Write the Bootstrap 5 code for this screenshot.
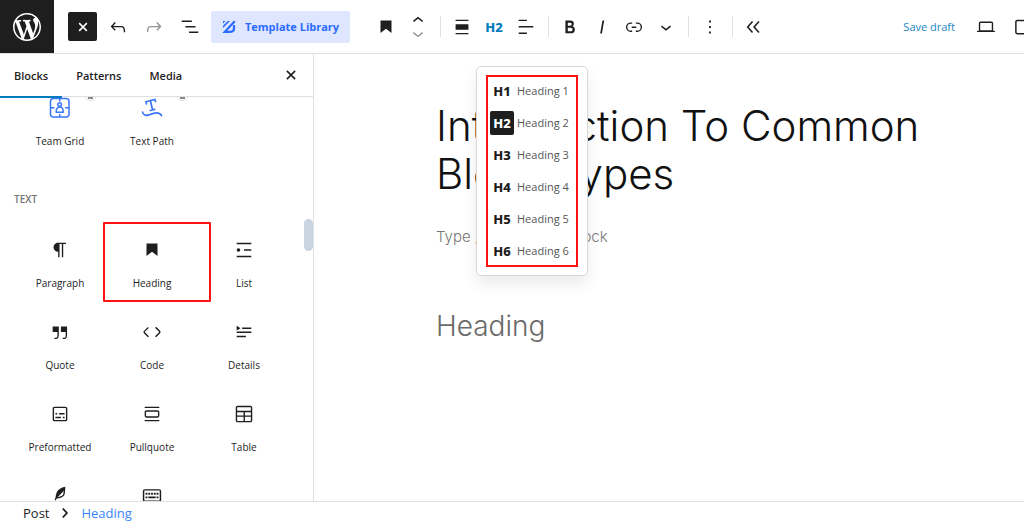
<!DOCTYPE html>
<html lang="en">
<head>
<meta charset="utf-8">
<meta name="viewport" content="width=device-width, initial-scale=1">
<title>Edit Post</title>
<link href="https://cdn.jsdelivr.net/npm/bootstrap@5.3.0/dist/css/bootstrap.min.css" rel="stylesheet">
<style>
  :root { --ink: #1e1e1e; --line: #e0e0e0; --wp: #007cba; --brand: #2b6bff; --mark: #fb1313; }
  body { font-family: "Open Sans", "Noto Sans", sans-serif; font-size: 11px; line-height: 16px; color: var(--ink); background: #fff; }
  button { font: inherit; color: inherit; background: none; border: 0; padding: 0; }
  svg { display: block; fill: currentColor; width: 22px; height: 22px; flex: none; }
  .topbar { height: 54px; border-bottom: 1px solid var(--line); }
  .wp-logo { width: 54px; height: 53px; background: #1e1e1e; color: #fff; }
  .wp-logo svg { width: 28px; height: 28px; }
  .close-inserter { width: 29px; height: 29px; border-radius: 2px; background: var(--ink); color: #fff; margin: 0 3px 0 14px; }
  .doc-tool { width: 36px; height: 32px; }
  .dimmed { color: #949494; }
  .library-btn { height: 32px; width: 139px; margin: 0 15px 0 3px; border-radius: 2px; background: #dfe6ff; color: var(--brand); font-weight: 700; gap: 9px; }
  .library-btn svg { width: 14px; height: 14px; }
  .tool-group { padding: 0 6px 0 5px; border-right: 1px solid var(--line); height: 21px; }
  .tool { width: 32px; height: 32px; }
  .mover svg { height: 14px; width: 22px; }
  .level-glyph { font-family: "Noto Sans", sans-serif; font-weight: 800; font-size: 13px; }
  .current { color: var(--wp); }
  .save-link { color: #1a86c4; text-decoration: none; margin-right: 15px; }
  .cut-tool { width: 15px; margin-left: 7px; }
  .inserter { width: 314px; border-right: 1px solid var(--line); }
  .tab-row { height: 43px; border-bottom: 1px solid var(--line); font-weight: 600; padding-right: 6px; }
  .tab-row .tab-btn { padding: 0 14px; height: 44px; }
  .tab-row .active { border-bottom: 2px solid var(--wp); padding-top: 2px; }
  .block-list { padding: 0 14px; }
  .tiles { display: grid; grid-template-columns: repeat(3, 92px); grid-auto-rows: 82px; }
  .tile { gap: 14px; font-size: 10px; padding-top: 14px; }
  .tiles.first { height: 94px; margin-top: -14px; }
  .pro-dot { top: 5px; left: 70px; width: 13px; height: 13px; border-radius: 50%; border: 1px solid #ddd; background: #fff; }
  .pro-dot::after { content: ""; position: absolute; left: 3px; right: 3px; top: 8px; height: 2px; background: #888; }
  .section-name { font-size: 10px; line-height: 12px; font-weight: 600; color: #757575; margin: 16px 0 20px; }
  .marked::after { content: ""; position: absolute; inset: -3px -13px 5px -3px; border: 2px solid var(--mark); border-radius: 1px; }
  .thumb { right: 0; top: 165px; width: 9px; height: 32px; border-radius: 5px; background: #c8d5e0; }
  .canvas { font-family: Inter, sans-serif; font-weight: 300; padding: 48px 24px 0 122px; }
  .canvas h1 { font-size: 42px; line-height: 48px; font-weight: 300; color: #111; max-width: 500px; margin: 0 0 27px; }
  .canvas p { font-size: 15px; line-height: 24px; color: #767676; margin: 0 0 57px; }
  .canvas h2 { font-size: 28px; line-height: 40px; font-weight: 300; color: #6a6a6a; margin: 0; }
  .levels { left: 162px; top: 12px; width: 112px; padding: 8px 9px; border: 1px solid #d8d8d8; border-radius: 5px; background: #fff; box-shadow: 0 8px 16px rgba(0,0,0,.08); font-family: "Open Sans", sans-serif; font-weight: 400; }
  .levels ul { outline: 2px solid var(--mark); outline-offset: -2px; }
  .levels button { height: 32px; gap: 3px; padding-left: 4px; color: #555; }
  .levels .level-glyph { width: 24px; height: 24px; line-height: 24px; border-radius: 2px; color: var(--ink); text-align: center; }
  .levels .picked .level-glyph { background: var(--ink); color: #fff; }
  .crumbs { height: 21px; border-top: 1px solid var(--line); padding: 2px 0 0 23px; gap: 7px; font-weight: 500; font-size: 13px; }
  .crumbs a { text-decoration: none; color: #3a86f7; }
  .crumbs svg { width: 18px; height: 18px; }
</style>
</head>
<body class="vh-100 d-flex flex-column overflow-hidden">

<header class="topbar d-flex align-items-center flex-shrink-0 overflow-hidden">
  <a href="#" class="wp-logo d-flex align-items-center justify-content-center flex-shrink-0" aria-label="View Posts">
    <svg viewBox="0 0 20 20"><path d="M20 10c0-5.51-4.49-10-10-10C4.48 0 0 4.49 0 10c0 5.52 4.48 10 10 10 5.51 0 10-4.48 10-10zM7.78 15.37L4.37 6.22c.55-.02 1.17-.08 1.17-.08.5-.06.44-1.13-.06-1.11 0 0-1.45.11-2.37.11-.18 0-.37 0-.58-.01C4.12 2.69 6.87 1.11 10 1.11c2.33 0 4.45.87 6.05 2.34-.68-.11-1.65.39-1.65 1.58 0 .74.45 1.36.9 2.1.35.61.55 1.36.55 2.46 0 1.49-1.4 5-1.4 5l-3.03-8.37c.54-.02.82-.17.82-.17.5-.05.44-1.25-.06-1.22 0 0-1.44.12-2.38.12-.87 0-2.33-.12-2.33-.12-.5-.03-.56 1.2-.06 1.22l.92.08 1.26 3.41zM17.41 10c.24-.64.74-1.87.43-4.25.7 1.29 1.05 2.71 1.05 4.25 0 3.29-1.73 6.24-4.4 7.78.97-2.59 1.94-5.2 2.92-7.78zM6.1 18.09C3.12 16.65 1.11 13.53 1.11 10c0-1.3.23-2.48.72-3.59C3.25 10.3 4.67 14.2 6.1 18.09zm4.03-6.63l2.58 6.98c-.86.29-1.76.45-2.71.45-.79 0-1.57-.11-2.29-.33.81-2.38 1.62-4.74 2.42-7.1z"/></svg>
  </a>
  <button class="close-inserter d-flex align-items-center justify-content-center flex-shrink-0" aria-label="Toggle block inserter"><svg viewBox="0 0 24 24"><path d="M7.800 7.800l8.400 8.400M16.200 7.800l-8.400 8.400" stroke="currentColor" stroke-width="1.700"/></svg></button>
  <button class="doc-tool d-flex align-items-center justify-content-center" aria-label="Undo"><svg viewBox="0 0 24 24"><path d="M18.300 11.700c-.6-.6-1.400-.9-2.300-.9H6.700l2.900-3.300-1.100-1-4.500 5L8.500 16l1-1-2.700-2.700H16c.5 0 .9.2 1.300.5 1 1 1 3.400 1 4.500v.3h1.500v-.2c0-1.500 0-4.300-1.500-5.700z"/></svg></button>
  <button class="doc-tool dimmed d-flex align-items-center justify-content-center" aria-label="Redo"><svg viewBox="0 0 24 24"><path d="M15.600 6.500l-1.100 1 2.900 3.300H8c-.9 0-1.700.3-2.300.9-1.400 1.500-1.400 4.200-1.400 5.600v.2h1.500v-.3c0-1.100 0-3.500 1-4.500.3-.3.7-.5 1.300-.5h9.200L14.500 15l1.100 1.100 4.600-4.600-4.600-5z"/></svg></button>
  <button class="doc-tool d-flex align-items-center justify-content-center" aria-label="Document overview"><svg viewBox="0 0 24 24"><path d="M3 5h11v1.600H3zM7 11h11v1.600H7zM21 17H11v1.600h10z"/></svg></button>
  <button class="library-btn d-flex align-items-center justify-content-center flex-shrink-0"><svg viewBox="0 0 14 14"><path d="M1 1h2.500L1 3.500zM1 5.800L5.800 1H8L1 8z"/><path d="M12.800 1.200L2.800 11.800H8.500Q12 11.800 12 8.500V5" fill="none" stroke="currentColor" stroke-width="2.200"/></svg>Template Library</button>

  <div class="tool-group d-flex align-items-center">
    <button class="tool d-flex align-items-center justify-content-center" aria-label="Heading block"><svg viewBox="0 0 24 24"><path d="M6 5v13.600l6-4.750 6 4.750V5z"/></svg></button>
    <div class="mover tool d-flex flex-column align-items-center justify-content-center">
      <button aria-label="Move up"><svg viewBox="0 4 24 15"><path d="M6.500 12.400L12 8l5.500 4.400-.9 1.200L12 10l-4.500 3.600z"/></svg></button>
      <button class="dimmed" aria-label="Move down"><svg viewBox="0 5 24 15"><path d="M17.500 11.600L12 16l-5.500-4.400.9-1.200L12 14l4.500-3.600z"/></svg></button>
    </div>
  </div>
  <div class="tool-group d-flex align-items-center">
    <button class="tool d-flex align-items-center justify-content-center" aria-label="Align"><svg viewBox="0 0 24 24"><path d="M5 5.500h14V4H5v1.500ZM5 20h14v-1.500H5V20ZM5 9v6h14V9H5Z"/></svg></button>
    <button class="tool level-glyph current" aria-expanded="true">H2</button>
    <button class="tool d-flex align-items-center justify-content-center" aria-label="Align text"><svg viewBox="0 0 24 24"><path d="M13 5.500H4V4h9v1.500Zm7 7H4V11h16v1.500Zm-7 7H4V18h9v1.500Z"/></svg></button>
  </div>
  <div class="tool-group d-flex align-items-center">
    <button class="tool d-flex align-items-center justify-content-center" aria-label="Bold"><svg viewBox="0 0 24 24"><path d="M14.700 11.300c1-.6 1.500-1.600 1.500-3 0-2.300-1.300-3.400-4-3.400H7v14h5.800c1.400 0 2.500-.3 3.300-1 .8-.7 1.200-1.700 1.200-2.900.1-1.900-.8-3.100-2.600-3.700zm-5.100-4h2.300c.6 0 1.100.1 1.400.4.3.3.5.7.5 1.200s-.2 1-.5 1.200c-.3.3-.8.4-1.400.4H9.600V7.300zm4.600 9c-.4.3-1 .4-1.700.4H9.600v-3.900h2.900c.7 0 1.300.2 1.700.5.4.3.6.8.6 1.500s-.2 1.200-.6 1.500z"/></svg></button>
    <button class="tool d-flex align-items-center justify-content-center" aria-label="Italic"><svg viewBox="0 0 24 24"><path d="M12.500 5L10 19h1.900l2.500-14z"/></svg></button>
    <button class="tool d-flex align-items-center justify-content-center" aria-label="Link"><svg viewBox="0 0 24 24"><path d="M10 17.389H8.444A5.194 5.194 0 1 1 8.444 7H10v1.500H8.444a3.694 3.694 0 0 0 0 7.389H10v1.500ZM14 7h1.556a5.194 5.194 0 0 1 0 10.390H14v-1.500h1.556a3.694 3.694 0 0 0 0-7.390H14V7Zm-4.500 6h5v-1.500h-5V13Z"/></svg></button>
    <button class="tool d-flex align-items-center justify-content-center" aria-label="More formatting"><svg viewBox="0 0 24 24"><path d="M17.500 11.600L12 16l-5.500-4.400.9-1.200L12 14l4.500-3.600z"/></svg></button>
  </div>
  <div class="tool-group d-flex align-items-center">
    <button class="tool d-flex align-items-center justify-content-center" aria-label="Options"><svg viewBox="0 0 24 24"><path d="M13 19h-2v-2h2v2zm0-6h-2v-2h2v2zm0-6h-2V5h2v2z"/></svg></button>
  </div>
  <button class="tool d-flex align-items-center justify-content-center ms-1" aria-label="Hide block tools"><svg viewBox="0 0 24 24"><path d="M11.500 6l-5.300 6 5.300 6M18.500 6l-5.300 6 5.300 6" fill="none" stroke="currentColor" stroke-width="1.700"/></svg></button>

  <a href="#" class="save-link ms-auto text-nowrap">Save draft</a>
  <button class="tool d-flex align-items-center justify-content-center" aria-label="View"><svg viewBox="0 0 24 24"><path d="M20.500 16h-.7V8c0-1.100-.9-2-2-2H6.200c-1.100 0-2 .9-2 2v8h-.7c-.8 0-1.500.7-1.500 1.500h20c0-.8-.7-1.500-1.500-1.500zM5.700 8c0-.3.2-.5.5-.5h11.600c.3 0 .5.2.5.5v7.600H5.700V8z"/></svg></button>
  <button class="cut-tool d-flex overflow-hidden" aria-label="Settings"><svg viewBox="0 0 24 24"><rect x="7.500" y="4.800" width="17" height="14.500" rx="1.500" fill="none" stroke="currentColor" stroke-width="1.600"/></svg></button>
</header>

<div class="d-flex flex-grow-1" style="min-height:0">
  <aside class="inserter d-flex flex-column flex-shrink-0 position-relative">
    <div class="tab-row d-flex align-items-start flex-shrink-0">
      <button class="tab-btn active">Blocks</button>
      <button class="tab-btn">Patterns</button>
      <button class="tab-btn">Media</button>
      <button class="ms-auto tool align-self-center d-flex align-items-center justify-content-center" aria-label="Close"><svg viewBox="0 0 24 24"><path d="M7.500 7.500l9 9M16.500 7.500l-9 9" stroke="currentColor" stroke-width="1.700"/></svg></button>
    </div>
    <div class="block-list flex-grow-1 overflow-hidden">
      <div class="tiles first">
        <button class="tile d-flex flex-column align-items-center position-relative"><span class="pro-dot position-absolute"></span>
          <svg viewBox="0 0 22 22" fill="none" stroke="#3b76fa" stroke-width="1.500"><g fill="none"><rect x="1.500" y="1.500" width="18.500" height="18.500" rx="3"/><path d="M1.500 10.700h4M16 10.700h4M10.700 1.500v3M10.700 17v3"/><circle cx="10.700" cy="7.500" r="1.800"/><path d="M7.300 15.200c-.5-2 .5-5.200 3.400-5.200s3.900 3.200 3.400 5.200z"/></g></svg>Team Grid</button>
        <button class="tile d-flex flex-column align-items-center position-relative"><span class="pro-dot position-absolute"></span>
          <svg viewBox="0 0 22 22" stroke="#3b76fa" stroke-width="1.700" stroke-linecap="round"><path fill="none" d="M5.500 7L5 4.800 13.800 2.500l.7 2M9.400 3.700l2.200 9.300M9.300 13.500l4.300-1.100M1.500 15c.5 3.500 4 4 7.500 2.500 4-1.800 9-3.200 11.500 1"/></svg>Text Path</button>
      </div>
      <h2 class="section-name">TEXT</h2>
      <div class="tiles">
        <button class="tile d-flex flex-column align-items-center"><svg viewBox="0 0 24 24"><path d="m9.996 14v-.225l.004 0v6.225h1.500v-14.500h2.500v14.500h1.500v-14.500h3v-1.500h-8.504c-2.761 0-5 2.239-5 5 0 2.761 2.239 5 5 5z"/></svg>Paragraph</button>
        <button class="tile marked d-flex flex-column align-items-center position-relative"><svg viewBox="0 0 24 24"><path d="M6 5v13.600l6-4.750 6 4.750V5z"/></svg>Heading</button>
        <button class="tile d-flex flex-column align-items-center"><svg viewBox="0 0 24 24"><path d="M4 4v1.600h16V4H4zm8 8.800h8v-1.600h-8v1.600zM4 20h16v-1.600H4V20z"/><circle cx="6" cy="12" r="2"/></svg>List</button>
        <button class="tile d-flex flex-column align-items-center"><svg viewBox="0 0 24 24"><path d="M13 6v6h5.200v4c0 .8-.2 1.400-.5 1.700-.6.6-1.600.6-2.500.5h-.3v1.500h.5c1 0 2.300-.1 3.300-1 .6-.6 1-1.600 1-2.800V6H13zm-9 6h5.200v4c0 .8-.2 1.400-.5 1.700-.6.6-1.600.6-2.500.5h-.3v1.500h.5c1 0 2.300-.1 3.300-1 .6-.6 1-1.600 1-2.800V6H4v6z"/></svg>Quote</button>
        <button class="tile d-flex flex-column align-items-center"><svg viewBox="0 0 24 24"><path d="M20.800 10.700l-4.300-4.300-1.100 1.100 4.300 4.300c.1.1.1.3 0 .4l-4.300 4.300 1.100 1.100 4.300-4.300c.7-.8.7-1.900 0-2.600zM4.200 11.800l4.300-4.300-1-1-4.300 4.300c-.7.7-.7 1.800 0 2.500l4.300 4.300 1.100-1.100-4.300-4.300c-.2-.1-.2-.3-.1-.4z"/></svg>Code</button>
        <button class="tile d-flex flex-column align-items-center"><svg viewBox="0 0 24 24"><path d="M4 16h10v1.600H4V16Zm0-4.500h16v1.600H4v-1.600ZM10 7h10v1.600H10V7ZM4 5.200l4.200 2.600L4 10.400z"/></svg>Details</button>
        <button class="tile d-flex flex-column align-items-center"><svg viewBox="0 0 24 24"><path d="M18 4H6c-1.100 0-2 .9-2 2v12c0 1.100.9 2 2 2h12c1.100 0 2-.9 2-2V6c0-1.100-.9-2-2-2zm.5 14c0 .3-.2.5-.5.5H6c-.3 0-.5-.2-.5-.5V6c0-.3.2-.5.5-.5h12c.3 0 .5.2.5.5v12zM7 16.500h6V15H7v1.500zm4-4h6V11h-6v1.500zM9 11H7v1.500h2V11zm6 5.500h2V15h-2v1.500z"/></svg>Preformatted</button>
        <button class="tile d-flex flex-column align-items-center"><svg viewBox="0 0 24 24"><path d="M18 8H6c-1.100 0-2 .9-2 2v4c0 1.100.9 2 2 2h12c1.100 0 2-.9 2-2v-4c0-1.100-.9-2-2-2zm.5 6c0 .3-.2.5-.5.5H6c-.3 0-.5-.2-.5-.5v-4c0-.3.2-.5.5-.5h12c.3 0 .5.2.5.5v4zM4 4h16v1.500H4V4zm0 14.500h16V20H4v-1.500z"/></svg>Pullquote</button>
        <button class="tile d-flex flex-column align-items-center"><svg viewBox="0 0 24 24"><path d="M19 3H5c-1.100 0-2 .9-2 2v14c0 1.100.9 2 2 2h14c1.100 0 2-.9 2-2V5c0-1.100-.9-2-2-2zM5 4.500h14c.3 0 .5.2.5.5v3.500h-15V5c0-.3.2-.5.5-.5zm8 5.500h6.500v3.500H13V10zm-1.500 3.500h-7V10h7v3.500zm-7 5.500v-4h7v4.500H5c-.3 0-.5-.2-.5-.5zm14.500.5h-6V15h6.500v4c0 .3-.2.5-.5.5z"/></svg>Table</button>
        <button class="tile d-flex flex-column align-items-center" aria-label="Verse"><svg viewBox="0 0 24 24"><path d="M17.800 2l-.9.3c-.1 0-3.600 1-5.200 2.100C10 5.500 9.300 6.500 8.900 7.100c-.6.9-1.700 4.700-1.700 6.300l-.9 2.300c-.2.4 0 .8.4 1 .1 0 .2.1.3.1.3 0 .6-.2.7-.5l.6-1.500c.3 0 .7-.1 1.200-.2.7-.1 1.400-.3 2.200-.5.8-.2 1.600-.5 2.400-.8.7-.3 1.400-.7 1.900-1.200s.8-1.200 1-1.900c.2-.7.3-1.600.4-2.400.1-.8.1-1.700.2-2.500 0-.8.1-1.500.2-2.100V2zm-1.900 5.600c-.1.8-.2 1.500-.3 2.100-.2.6-.4 1-.6 1.300-.3.3-.8.6-1.400.9-.7.3-1.400.5-2.200.8-.6.2-1.300.3-1.800.4L15 7.500c.3-.3.6-.7 1-1.100 0 .4 0 .8-.1 1.200zM6 20h8v-1.500H6V20z"/></svg></button>
        <button class="tile d-flex flex-column align-items-center" aria-label="Shortcode"><svg viewBox="0 0 24 24"><path fill-rule="evenodd" d="M20 4.500H4a2 2 0 0 0-2 2v10a2 2 0 0 0 2 2h16a2 2 0 0 0 2-2v-10a2 2 0 0 0-2-2zm.4 12.400H3.600V6.100h16.800zM5 8.500h2v2H5zm3 0h2v2H8zm3 0h2v2h-2zm3 0h2v2h-2zm3 0h2v2h-2zM5 12.500h2v2H5zm3 0h8v2H8zm9 0h2v2h-2z"/></svg></button>
      </div>
    </div>
    <div class="thumb position-absolute"></div>
  </aside>

  <main class="canvas flex-grow-1 position-relative">
    <h1>Introduction To Common Block Types</h1>
    <p>Type / to choose a block</p>
    <h2>Heading</h2>
    <div class="levels position-absolute" role="menu">
      <ul class="list-unstyled mb-0">
        <li><button class="d-flex align-items-center w-100"><span class="level-glyph">H1</span>Heading 1</button></li>
        <li><button class="d-flex align-items-center w-100 picked"><span class="level-glyph">H2</span>Heading 2</button></li>
        <li><button class="d-flex align-items-center w-100"><span class="level-glyph">H3</span>Heading 3</button></li>
        <li><button class="d-flex align-items-center w-100"><span class="level-glyph">H4</span>Heading 4</button></li>
        <li><button class="d-flex align-items-center w-100"><span class="level-glyph">H5</span>Heading 5</button></li>
        <li><button class="d-flex align-items-center w-100"><span class="level-glyph">H6</span>Heading 6</button></li>
      </ul>
    </div>
  </main>
</div>

<footer class="crumbs d-flex align-items-center flex-shrink-0">
  <span>Post</span>
  <svg viewBox="0 0 24 24"><path d="M9 6l5.500 6L9 18" fill="none" stroke="currentColor" stroke-width="2.400"/></svg>
  <a href="#">Heading</a>
</footer>
<script src="https://cdn.jsdelivr.net/npm/bootstrap@5.3.0/dist/js/bootstrap.bundle.min.js"></script>
</body>
</html>
